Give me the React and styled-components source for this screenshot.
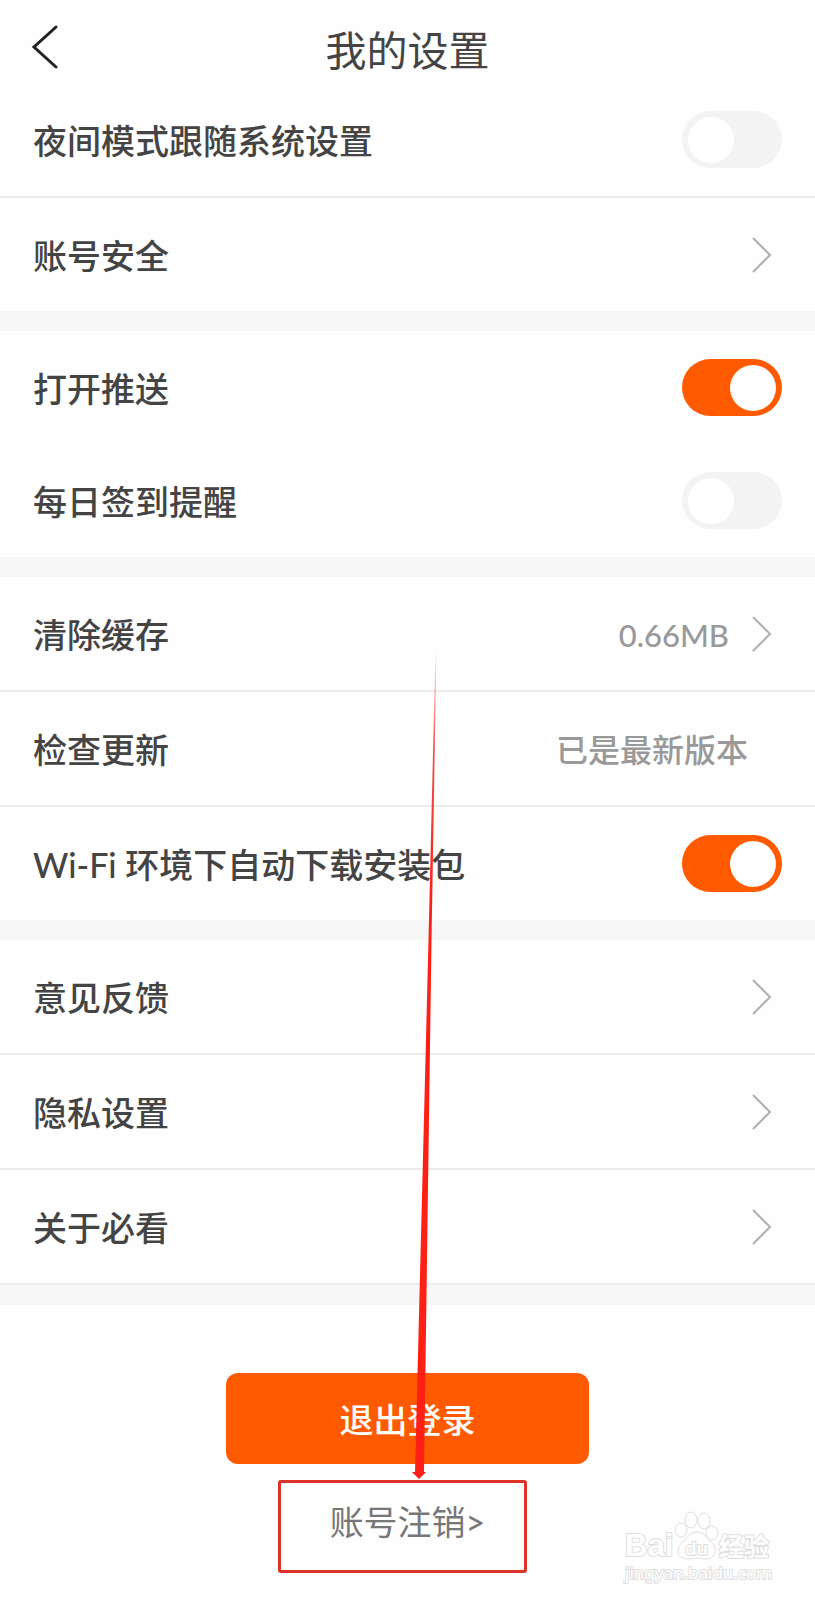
import React, { useState } from 'react'
import styled, { createGlobalStyle } from 'styled-components'

const GlobalStyle = createGlobalStyle`
    * {
        box-sizing: border-box;
    }

    body {
        margin: 0;
        background: #fefefe;
        font-family: Lato, 'Noto Sans CJK SC', sans-serif;
        color: #444444;
    }
`

const Page = styled.div`
    position: relative;
    min-height: 100vh;
    overflow: hidden;
`

const Header = styled.header`
    display: grid;
    grid-template-columns: 1fr auto 1fr;
    align-items: center;
    height: 83px;
    padding: 10px 30px 0;
`

const BackButton = styled.button`
    display: flex;
    justify-self: start;
    padding: 0;
    border: none;
    background: none;
    cursor: pointer;
`

const Title = styled.h1`
    margin: 0;
    padding-top: 2px;
    font-size: 41px;
    font-weight: 400;
    line-height: 60px;
    font-family: 'Noto Sans CJK SC', sans-serif;
`

const Settings = styled.main`
    display: flex;
    flex-direction: column;
    gap: 20px;
    padding-bottom: 20px;
    background: #f7f7f7;
`

const Section = styled.section`
    background: #fefefe;
`

const Row = styled.div`
    display: flex;
    align-items: center;
    justify-content: space-between;
    min-height: 113px;
    padding: 0 33px;
    box-sizing: content-box;
    border-bottom: ${(props) => (props.$line ? '2px solid #ececec' : 'none')};
    color: inherit;
    text-decoration: none;
`

const Label = styled.span`
    padding-top: 2px;
    font-size: 34px;
    font-weight: 500;
    line-height: 48px;
`

const Extra = styled.span`
    display: flex;
    align-items: center;
    gap: 23px;
    padding-right: ${(props) => (props.$arrow ? '10px' : '34px')};
`

const Value = styled.span`
    padding-top: 2px;
    font-size: ${(props) => (props.$arrow ? '31px' : '32px')};
    font-weight: 500;
    line-height: 48px;
    color: #999999;
`

const Switch = styled.input`
    appearance: none;
    flex: none;
    display: flex;
    align-items: center;
    width: 100px;
    height: 57px;
    margin: 0;
    padding: 0 6px;
    border-radius: 29px;
    background: #f3f3f3;
    cursor: pointer;

    &::before {
        content: '';
        width: 46px;
        height: 46px;
        border-radius: 50%;
        background: #ffffff;
    }

    &:checked {
        justify-content: flex-end;
        background: #ff5a00;
    }
`

const Footer = styled.footer`
    display: flex;
    flex-direction: column;
    align-items: center;
    padding: 68px 34px 50px;
`

const LogoutButton = styled.button`
    width: 363px;
    height: 91px;
    padding: 2px 0 0;
    border: none;
    border-radius: 12px;
    background: #ff5a00;
    color: #ffffff;
    font-family: inherit;
    font-size: 34px;
    font-weight: 500;
    line-height: 48px;
    cursor: pointer;
`

const CancelLink = styled.a`
    position: relative;
    margin-top: 34px;
    font-size: 34px;
    line-height: 48px;
    color: #777777;
    text-decoration: none;
`

const Highlight = styled.span`
    position: absolute;
    top: -18px;
    left: calc(50% - 130px);
    width: 249px;
    height: 93px;
    border: 3px solid #dc3228;
    border-radius: 3px;
`

const Pointer = styled.svg`
    position: absolute;
    bottom: calc(100% + 19px);
    left: calc(50% + 3px);
    pointer-events: none;
`

const Watermark = styled.svg`
    position: absolute;
    right: 40px;
    bottom: 10px;

    text {
        paint-order: stroke;
        stroke-width: 2px;
    }
`

const groups = [
    [
        { label: '夜间模式跟随系统设置', type: 'switch', id: 'night', line: true },
        { label: '账号安全', type: 'link' },
    ],
    [
        { label: '打开推送', type: 'switch', id: 'push' },
        { label: '每日签到提醒', type: 'switch', id: 'checkin' },
    ],
    [
        { label: '清除缓存', type: 'link', value: '0.66MB', line: true },
        { label: '检查更新', type: 'text', value: '已是最新版本', line: true },
        { label: 'Wi-Fi 环境下自动下载安装包', type: 'switch', id: 'wifi' },
    ],
    [
        { label: '意见反馈', type: 'link', line: true },
        { label: '隐私设置', type: 'link', line: true },
        { label: '关于必看', type: 'link', line: true },
    ],
]

function Chevron() {
    return (
        <svg width="20" height="36" viewBox="0 0 20 36" fill="none" stroke="#b0b0b0" strokeWidth="2">
            <path d="M1 1L18 18L1 35" />
        </svg>
    )
}

function SettingRow({ item, checked, onToggle }) {
    if (item.type === 'switch') {
        return (
            <Row as="label" htmlFor={item.id} $line={item.line}>
                <Label>{item.label}</Label>
                <Switch type="checkbox" id={item.id} checked={checked} onChange={() => onToggle(item.id)} />
            </Row>
        )
    }

    const isLink = item.type === 'link'
    return (
        <Row as={isLink ? 'a' : 'div'} href={isLink ? '#' : undefined} $line={item.line}>
            <Label>{item.label}</Label>
            <Extra $arrow={isLink}>
                {item.value && <Value $arrow={isLink}>{item.value}</Value>}
                {isLink && <Chevron />}
            </Extra>
        </Row>
    )
}

function App() {
    const [switches, setSwitches] = useState({ night: false, push: true, checkin: false, wifi: true })

    const handleToggle = (id) => {
        setSwitches({ ...switches, [id]: !switches[id] })
    }

    return (
        <Page>
            <GlobalStyle />
            <Header>
                <BackButton type="button" aria-label="返回">
                    <svg width="30" height="46" viewBox="0 0 30 46" fill="none" stroke="#222222" strokeWidth="3" strokeLinecap="round">
                        <path d="M26 3L4 23L26 43" />
                    </svg>
                </BackButton>
                <Title>我的设置</Title>
            </Header>
            <Settings>
                {groups.map((items, index) => (
                    <Section key={index}>
                        {items.map((item) => (
                            <SettingRow
                                key={item.label}
                                item={item}
                                checked={switches[item.id]}
                                onToggle={handleToggle}
                            />
                        ))}
                    </Section>
                ))}
            </Settings>
            <Footer>
                <LogoutButton type="button">退出登录</LogoutButton>
                <CancelLink href="#">
                    账号注销&gt;
                    <Highlight />
                    <Pointer width="30" height="831" viewBox="0 0 30 831">
                        <defs>
                            <linearGradient id="fade" x1="0" y1="0" x2="0" y2="1">
                                <stop offset="0" stopColor="#ff2015" stopOpacity="0" />
                                <stop offset="0.12" stopColor="#e8281c" stopOpacity="0.8" />
                                <stop offset="0.3" stopColor="#ff2015" />
                            </linearGradient>
                        </defs>
                        <path d="M25.5 0L26.5 0L21.5 292L14 824L16 824L9 831L2 824L5 824L18.5 292Z" fill="url(#fade)" />
                    </Pointer>
                </CancelLink>
            </Footer>
            <Watermark width="152" height="80" viewBox="0 0 152 80" fill="#fefefe" stroke="#dedede" strokeWidth="1">
                <text x="2" y="46" fontFamily="Liberation Sans" fontWeight="700" fontSize="31">Bai</text>
                <path d="M74 22C80 22 84 27 87 31C91 34 93 38 92 42C91 47 87 49 82 49C78 49 77 48 74 48C71 48 70 49 66 49C60 49 56 47 55 42C55 38 57 34 61 31C64 27 68 22 74 22Z" />
                <ellipse cx="58" cy="20" rx="6" ry="7" />
                <ellipse cx="68" cy="10" rx="6" ry="8" />
                <ellipse cx="81" cy="11" rx="6" ry="8" />
                <ellipse cx="89" cy="23" rx="6" ry="7" />
                <text x="62" y="45" fontFamily="Liberation Sans" fontWeight="700" fontSize="19">du</text>
                <text x="96" y="46" fontFamily="Noto Sans CJK SC" fontWeight="700" fontSize="25">经验</text>
                <text x="2" y="69" fontFamily="Noto Sans" fontSize="17">jingyan.baidu.com</text>
            </Watermark>
        </Page>
    )
}

export default App
